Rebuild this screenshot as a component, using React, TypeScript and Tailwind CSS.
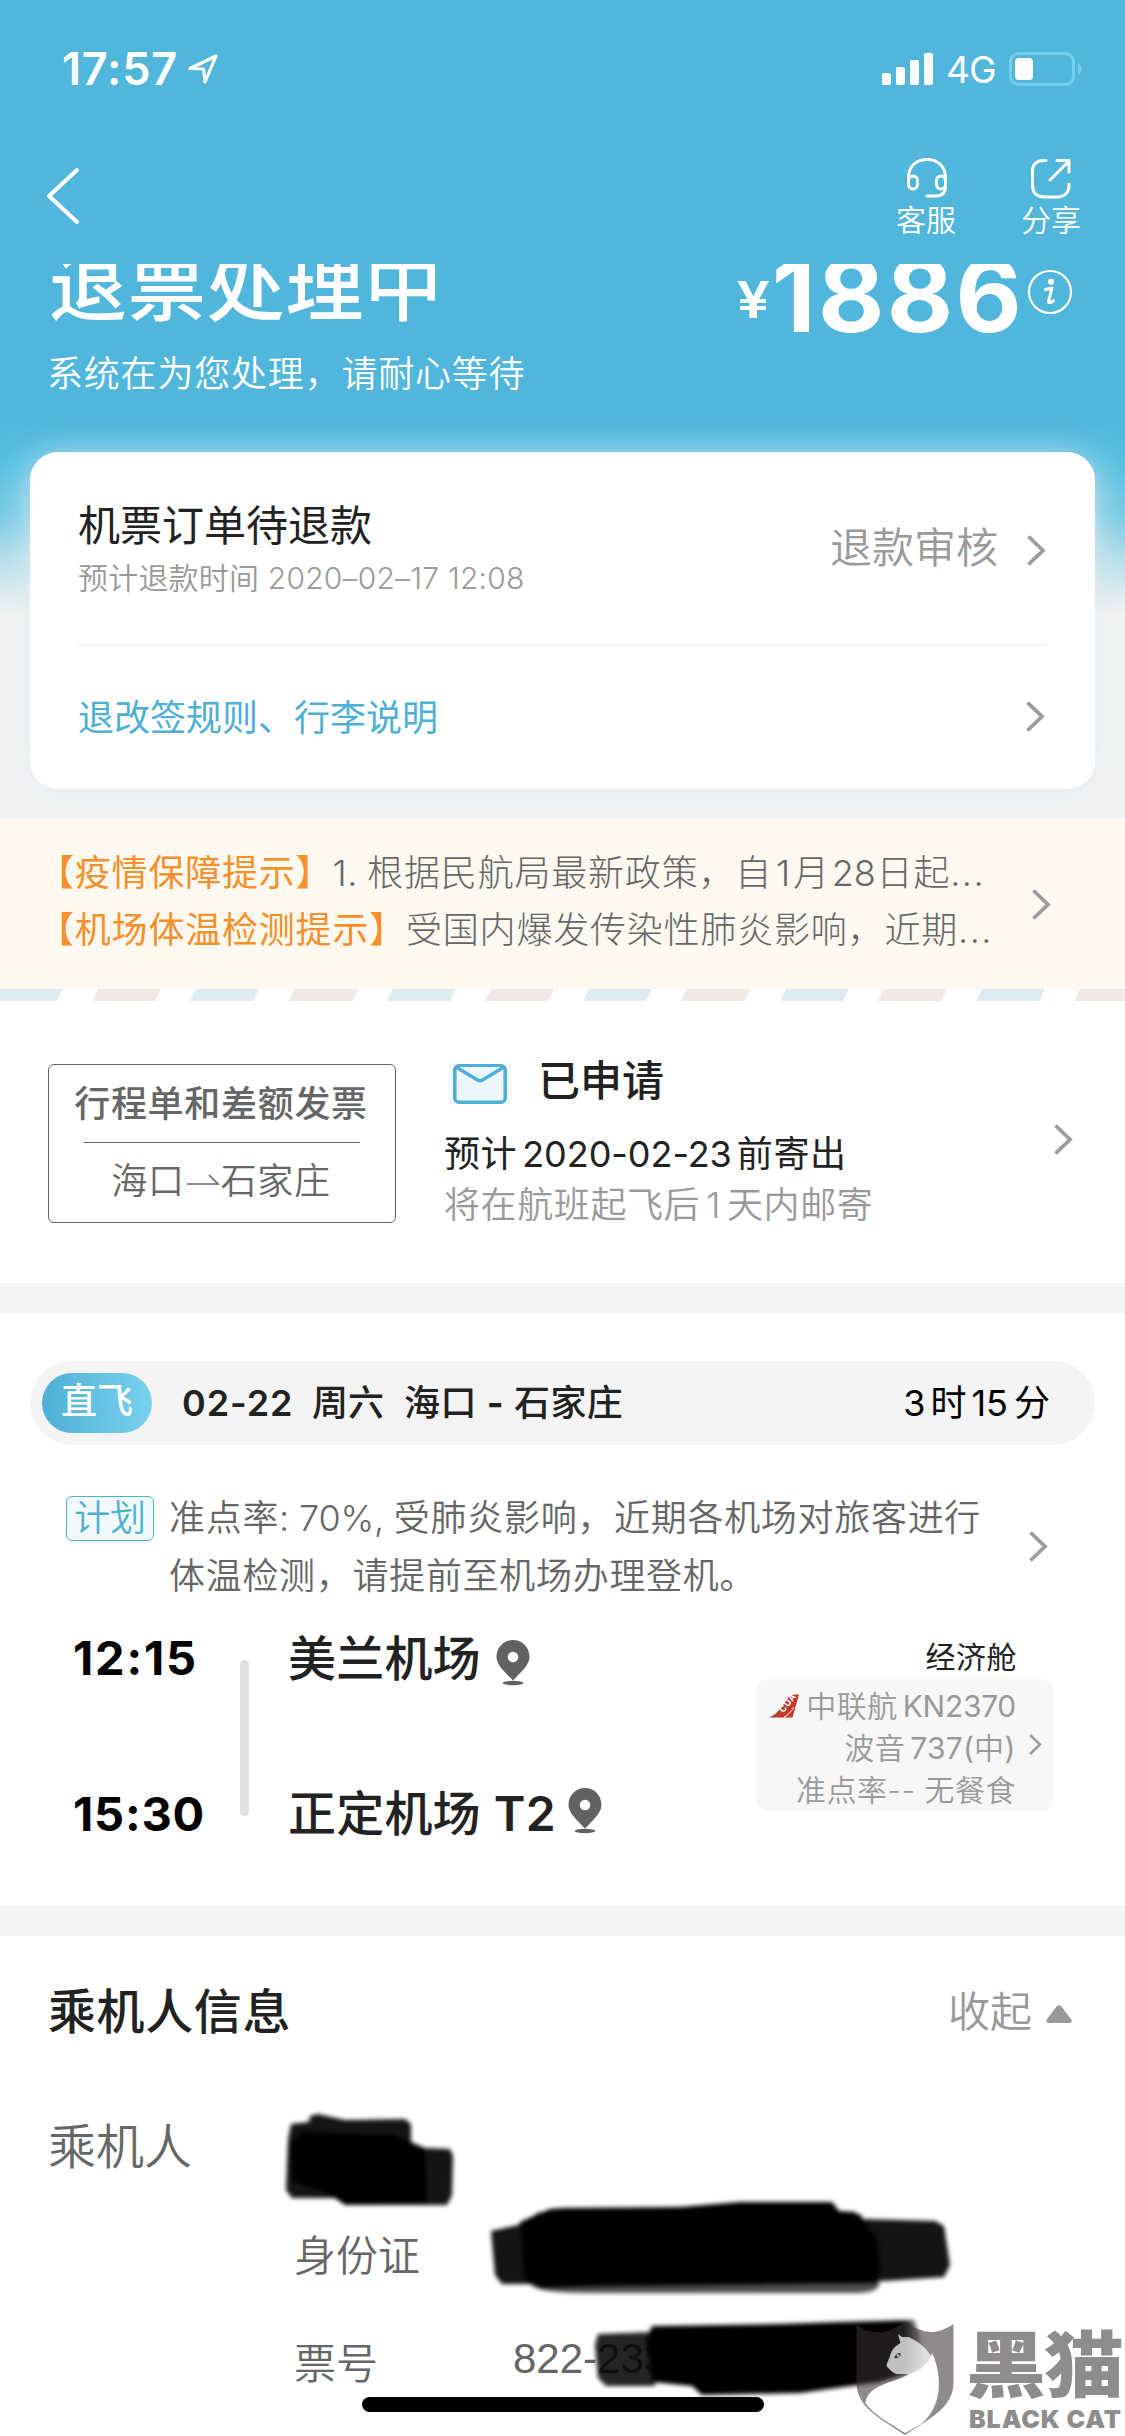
import React from 'react'

const Chevron = ({ className = 'w-[19px] h-[31px]' }: { className?: string }) => (
  <svg viewBox="0 0 19 31" className={className} fill="none" stroke="#9c9c9c" strokeWidth="3.8">
    <path d="M1.500 1.500 L16 15.500 L1.500 29.500" />
  </svg>
)

const Pin = () => (
  <svg viewBox="0 0 34 46" className="w-[34px] h-[46px]">
    <path d="M17 0 C7.500 0 0.500 7.500 0.500 17 C0.500 25 9 32 17 40.500 C25 32 33.500 25 33.500 17 C33.500 7.500 26.500 0 17 0 Z" fill="#626262" />
    <circle cx="17" cy="17" r="5.300" fill="#fff" />
    <ellipse cx="17" cy="43" rx="10.500" ry="2.200" fill="#626262" />
  </svg>
)

const StatusBar = () => (
  <div className="flex items-center h-[138px] pl-[62px] pr-[43px] text-white">
    <span className="text-[45px] leading-[50px] font-semibold tracking-[0.8px]">17:57</span>
    <svg viewBox="0 0 30 30" className="w-[30px] h-[30px] ml-[10px]" fill="none" stroke="#fff" strokeWidth="3.2" strokeLinejoin="round">
      <path d="M28 2 L2 14.500 L15.500 15 L17 28 Z" />
    </svg>
    <div className="flex items-end gap-[5px] ml-auto">
      <i className="w-[9px] h-[12px] rounded-[2px] bg-white" />
      <i className="w-[9px] h-[18px] rounded-[2px] bg-white" />
      <i className="w-[9px] h-[25px] rounded-[2px] bg-white" />
      <i className="w-[9px] h-[32px] rounded-[2px] bg-white" />
    </div>
    <span className="ml-[13px] w-[50px] text-[37px] leading-[42px] tracking-[-1px] mt-[2px]">4G</span>
    <svg viewBox="0 0 74 34" className="w-[74px] h-[34px] ml-[13px] -mr-px">
      <rect x="1.500" y="1.500" width="63" height="31" rx="8" fill="none" stroke="#76cdea" strokeWidth="3" />
      <rect x="6" y="6" width="18" height="22" rx="4" fill="#fff" />
      <path d="M69 11 C74 13 74 21 69 23 Z" fill="#76cdea" />
    </svg>
  </div>
)

const NavBar = () => (
  <div className="flex items-start h-[126px] pl-[46px] pr-[44px] text-white">
    <svg viewBox="0 0 34 58" className="w-[34px] h-[58px] mt-[29px]" fill="none" stroke="#fff" strokeWidth="4" strokeLinecap="round" strokeLinejoin="round">
      <path d="M31 3 L3 29 L31 55" />
    </svg>
    <div className="ml-auto flex flex-col items-center w-[60px] mt-[19px]">
      <svg viewBox="0 0 42 42" className="w-[42px] h-[42px] ml-[2px]" fill="none" stroke="#fff" strokeWidth="3" strokeLinecap="round">
        <path d="M2.500 27 V21 C2.500 9 10.500 2.500 21 2.500 C31.500 2.500 39.500 9 39.500 21 V29 C39.500 36 35.500 39 30 39 H21" />
        <rect x="2.500" y="19" width="9" height="13" rx="4.500" />
        <rect x="30.500" y="19" width="9" height="13" rx="4.500" />
      </svg>
      <span className="text-[30px] leading-[36px] font-[350] whitespace-nowrap mt-[3px]">客服</span>
    </div>
    <div className="flex flex-col items-center w-[60px] mt-[19px] ml-[65px]">
      <svg viewBox="0 0 42 42" className="w-[42px] h-[42px]" fill="none" stroke="#fff" strokeWidth="3" strokeLinecap="round" strokeLinejoin="round">
        <path d="M16 3.500 H14 C6 3.500 2.500 8 2.500 14 V28 C2.500 36 7 40 14 40 H27 C35 40 39 35 39 29 V27" />
        <path d="M27 3.500 H39 V15 M38.500 4.500 L20 23" />
      </svg>
      <span className="text-[30px] leading-[36px] font-[350] whitespace-nowrap mt-[3px]">分享</span>
    </div>
  </div>
)

const Hero = () => (
  <div className="h-[188px] overflow-hidden pl-[47px] pr-[50px] text-white">
    <div className="flex items-start justify-between -mt-[24px]">
      <h1 className="text-[78px] leading-[90px] font-medium tracking-[0.8px] mt-[2px] ml-[2px]">退票处理中</h1>
      <div className="flex items-start">
        <span className="text-[51px] leading-[60px] font-semibold mt-[30px] mr-[4px] scale-x-115">¥</span>
        <span className="text-[102px] leading-[110px] font-bold tracking-[2.3px]">1886</span>
        <svg viewBox="0 0 46 46" className="w-[46px] h-[46px] ml-[3px] mt-[29px] mr-[2px]">
          <circle cx="23" cy="23" r="21" fill="none" stroke="#fff" strokeWidth="2.200" />
          <circle cx="24" cy="12.800" r="3" fill="#fff" />
          <path d="M18.500 20.500 L25 19 L21.500 32.500 C21.300 34 23 34 26.500 31.800" fill="none" stroke="#fff" strokeWidth="3" strokeLinejoin="round" strokeLinecap="round" />
        </svg>
      </div>
    </div>
    <p className="text-[36px] leading-[44px] font-[350] tracking-[0.8px] mt-[2px]">系统在为您处理，请耐心等待</p>
  </div>
)

const RefundCard = () => (
  <div className="mx-[30px] h-[337px] rounded-[28px] bg-white px-[48px] shadow-[0_6px_36px_rgba(228,235,239,0.9)]">
    <div className="flex items-center h-[193px] border-b border-[#ebebeb]">
      <div className="flex flex-col mt-[2px]">
        <h2 className="text-[42px] leading-[54px] text-[#222]">机票订单待退款</h2>
        <p className="text-[30px] leading-[44px] font-[350] text-[#999] tracking-[0.2px] mt-[3px]">预计退款时间 2020–02–17 12:08</p>
      </div>
      <span className="ml-auto text-[42px] leading-[50px] font-[350] text-[#999]">退款审核</span>
      <span className="ml-[29px] mr-px mt-[5px]"><Chevron /></span>
    </div>
    <div className="flex items-center h-[144px]">
      <span className="text-[36px] leading-[44px] text-[#4eb0d6] mt-[2px]">退改签规则、行李说明</span>
      <span className="ml-auto mr-[2px] -mt-[2px]"><Chevron /></span>
    </div>
  </div>
)

const Notice = () => (
  <div className="flex items-center h-[170px] bg-[#fdf8f0] pl-[38px] pr-[74px] text-[36px] leading-[57px] tracking-[0.8px] text-[#666]">
    <div className="font-light whitespace-nowrap -mt-[5px]">
      <p>
        <span className="font-normal text-[#f7902a]">【疫情保障提示】</span>1.&nbsp;<span className="-ml-[2px]">根据民航局最新政策，自</span>
        <span className="ml-[4px] mr-[2px]">1</span>月<span className="ml-[2px] mr-px tracking-[-0.200px]">28</span>日起<span className="tracking-[1.500px]">...</span>
      </p>
      <p><span className="font-normal text-[#f7902a]">【机场体温检测提示】</span>受国内爆发传染性肺炎影响，近期<span className="tracking-[1.500px]">...</span></p>
    </div>
    <span className="ml-auto"><Chevron /></span>
  </div>
)

const Stripes = () => (
  <div className="flex gap-[35.200px] h-[12px] overflow-hidden bg-white">
    {Array.from({ length: 12 }, (_, i) => (
      <i
        key={i}
        className={`h-[12px] w-[63px] shrink-0 -skew-x-[26deg] first:-ml-[3px] ${i % 2 ? 'bg-[#f1e7e5]' : 'bg-[#deecf1]'}`}
      />
    ))}
  </div>
)

const Invoice = () => (
  <div className="flex h-[282px] bg-white pl-[48px] pr-[52px] pt-[63px]">
    <div className="w-[348px] h-[159px] rounded-[6px] border border-[#666] flex flex-col items-center text-[36px] leading-[44px] tracking-[0.7px] text-[#666]">
      <span className="font-medium mt-[17px] -ml-[2px] whitespace-nowrap">行程单和差额发票</span>
      <i className="w-[276px] h-px bg-[#666] mt-[16px]" />
      <span className="flex mt-[16px] -ml-[2px] font-[350]">
        海口
        <svg viewBox="0 0 36 44" className="w-[36px] h-[44px]" fill="none" stroke="#666" strokeWidth="1.600">
          <path d="M2 25 H33 L24 16" />
        </svg>
        石家庄
      </span>
    </div>
    <div className="ml-[48px] text-[36px] tracking-[0.6px]">
      <div className="flex items-center ml-[9px] h-[40px]">
        <svg viewBox="0 0 54 40" className="w-[54px] h-[40px]" fill="#eef7fc" stroke="#4eb0d6" strokeWidth="3.600" strokeLinejoin="round">
          <rect x="1.800" y="1.800" width="50.400" height="36.400" rx="4" />
          <path d="M3 3 L24.500 16 Q27 17.500 29.500 16 L51 3" />
        </svg>
        <span className="ml-[31px] -mt-[6px] text-[42px] leading-[50px] font-medium text-[#222] tracking-[0]">已申请</span>
      </div>
      <p className="mt-[28px] leading-[44px] text-[#222] whitespace-nowrap">
        预计<span className="mx-[5px] tracking-[-0.050px]">2020-02-23</span>前寄出
      </p>
      <p className="mt-[7px] leading-[44px] font-[350] text-[#999] whitespace-nowrap">将在航班起飞后<span className="mx-[6px]">1</span>天内邮寄</p>
    </div>
    <span className="ml-auto mt-[60px]"><Chevron /></span>
  </div>
)

const Flight = () => (
  <div className="h-[593px] bg-white pt-[48px]">
    <div className="flex items-center h-[84px] mx-[30px] pl-[12px] pr-[45px] rounded-full bg-[#f4f4f4] text-[36px] leading-[44px] font-semibold text-[#222]">
      <span className="w-[110px] h-[60px] rounded-full bg-linear-to-r from-[#4eb0d6] to-[#79d2ec] text-white font-medium text-center leading-[56px]">直飞</span>
      <span className="ml-[30px] w-[130px] tracking-[0.900px]">02-22</span>
      <span className="w-[92px] font-medium">周六</span>
      <span className="font-medium tracking-[0.400px]">海口 <b className="font-bold">-</b> 石家庄</span>
      <span className="ml-auto font-normal text-black">3<span className="mx-[5px]">时</span>15<span className="ml-[6px]">分</span></span>
    </div>
    <div className="flex items-start mt-[43px] pl-[66px] pr-[77px]">
      <span className="w-[88px] h-[45px] mt-[8px] rounded-[6px] border border-[#4eb0d6] bg-[#f2f9fc] text-[36px] leading-[43px] font-[350] text-center text-[#4eb0d6]">计划</span>
      <p className="ml-[15px] mt-px text-[36px] leading-[58px] tracking-[0.7px] font-[350] text-[#666] whitespace-nowrap">
        准点率<span className="tracking-[-0.200px]">: 70%, </span>受肺炎影响，近期各机场对旅客进行<br />体温检测，请提前至机场办理登机。
      </p>
      <span className="ml-auto mt-[43px]"><Chevron /></span>
    </div>
    <div className="flex pl-[73px] mt-[28px]">
      <div className="flex flex-col justify-between w-[167px] h-[206px] text-[47px] leading-[50px] font-bold text-black">
        <span className="tracking-[1.800px]">12:15</span>
        <span className="tracking-[0.800px]">15:30</span>
      </div>
      <i className="w-[9px] h-[156px] mt-[27px] rounded-full bg-[#e0e0e0]" />
      <div className="flex flex-col justify-between w-[440px] h-[206px] ml-[39px] mr-px text-[48px] leading-[50px] font-medium tracking-[0.200px] text-[#222]">
        <span className="flex items-center -mt-px">美兰机场<i className="ml-[15px] mt-[8px]"><Pin /></i></span>
        <span className="flex items-center">正定机场 <b className="ml-[13px] font-semibold">T2</b><i className="ml-[12px] -mt-[7px]"><Pin /></i></span>
      </div>
      <div className="ml-[27px] w-[297px] text-[30px] leading-[42px] tracking-[0.5px]">
        <p className="pr-[36px] text-right text-[#222] mt-[3px]">经济舱</p>
        <div className="mt-px h-[132px] rounded-[12px] bg-[#f7f7f7] pl-[13px] pr-[11px] pt-[10px] flex items-center font-[350] text-[#999]">
          <div className="flex-1 flex flex-col items-end h-[130px]">
            <p className="flex items-center self-stretch">
              <svg viewBox="0 0 30 24" className="w-[30px] h-[24px]">
                <path d="M0 23.500 C9 20 14 11 19 4 C21 1 23 0.500 30 0.500 L23.500 23.500 Z" fill="#c23a2b" />
                <text x="11" y="18" fontSize="9" fontWeight="700" fill="#fff" transform="rotate(-52 14 15)">CUA</text>
                <path d="M15 23 C18 22 22 18 25 13" stroke="#fff" strokeWidth="1" fill="none" />
              </svg>
              <span className="ml-auto whitespace-nowrap">中联航<span className="ml-[5px] font-normal tracking-[-0.300px]">KN2370</span></span>
            </p>
            <p>波音<span className="ml-[5px] font-normal tracking-[0.200px]">737(</span>中<span className="font-normal">)</span></p>
            <p className="whitespace-nowrap">准点率-- 无餐食</p>
          </div>
          <span className="ml-[13px] -mt-[12px]"><Chevron className="w-[13px] h-[21px]" /></span>
        </div>
      </div>
    </div>
  </div>
)

const Passenger = () => (
  <div className="flex-1 bg-white pl-[48px] pr-[50px] pt-[46px] text-[#666]">
    <div className="flex items-center h-[60px] pr-[3px]">
      <h2 className="text-[48px] leading-[60px] font-medium tracking-[0.600px] text-[#222]">乘机人信息</h2>
      <span className="ml-auto text-[42px] leading-[50px] font-[350] text-[#999]">收起</span>
      <svg viewBox="0 0 26 18" className="w-[26px] h-[18px] ml-[14px] mt-[4px]" fill="#999">
        <path d="M10.800 1.200 Q13 -0.800 15.200 1.200 L25.300 14.500 Q26.500 18 23.500 18 H2.500 Q-0.500 18 0.700 14.500 Z" />
      </svg>
    </div>
    <p className="mt-[75px] text-[48px] leading-[60px] font-[350]">乘机人</p>
    <div className="ml-[246px] mt-[54px] text-[42px] leading-[50px] font-[350]">
      <p>身份证</p>
      <p className="flex mt-[58px]">
        <span className="w-[219px]">票号</span>
        <span className="font-['Liberation_Sans'] font-normal -mt-[5px]">822-233</span>
      </p>
    </div>
  </div>
)

// strokes painted over the private fields
const Redactions = () => (
  <svg viewBox="270 2090 700 320" className="absolute left-[270px] top-[2090px] w-[700px] h-[320px]">
    <defs>
      <filter id="soft" x="-5%" y="-10%" width="110%" height="120%"><feGaussianBlur stdDeviation="2" /></filter>
      <linearGradient id="fade" x1="0" x2="1" y1="0" y2="0">
        <stop offset="0.930" stopColor="#000" />
        <stop offset="1" stopColor="#000" stopOpacity="0.200" />
      </linearGradient>
    </defs>
    <g filter="url(#soft)">
      <path fillOpacity="0.920" d="M291 2124 L309 2122 L310 2116 L318 2114 L345 2120 L405 2119 L411 2124 L411 2142 L425 2148 L450 2149 L453 2156 L452 2195 L447 2205 L345 2205 L335 2198 L292 2198 L286 2190 L288 2140 Z" />
      <path d="M291 2145 L300 2132 L395 2135 L425 2150 L427 2203 L345 2204 L325 2192 L292 2182 Z" />
      <path fillOpacity="0.920" d="M491 2231 L518 2225 L540 2212 L860 2214 L863 2219 L935 2221 L944 2226 L950 2265 L944 2277 L885 2281 L520 2284 L502 2284 L495 2275 Z" />
      <path d="M520 2222 L550 2209 L562 2208 L680 2207 L740 2202 L832 2202 L839 2211 L855 2212 L864 2222 L878 2240 L880 2270 L877 2283 L600 2286 L540 2288 L525 2280 Z" />
      <path fillOpacity="0.700" d="M528 2282 H880 C878 2292 868 2293 850 2293 H600 C560 2293 535 2292 528 2282 Z" />
      <path fillOpacity="0.860" d="M598 2334 L655 2332 L655 2386 L606 2386 L598 2378 L595 2345 Z" />
      <path fill="url(#fade)" d="M652 2326 L780 2324 L840 2322 L914 2320 L920 2335 L923 2368 L880 2382 L800 2393 L702 2395 L692 2386 L652 2382 L646 2340 Z" />
    </g>
  </svg>
)

const Watermark = () => (
  <div className="absolute left-[856px] top-[2320px] flex">
    <svg viewBox="856 2320 98 116" className="w-[98px] h-[116px]">
      <path
        fill="rgb(57,50,54)"
        fillOpacity="0.565"
        d="M856.500 2325 Q880 2341 905 2321.500 Q930 2341 953.500 2324 V2383 C953 2408 930 2418 905 2435 C880 2418 857 2408 856.500 2383 Z"
      />
      <path
        fill="#fff"
        fillOpacity="0.720"
        d="M898 2334 L902 2337 L908.500 2337 C930 2347 939 2364 939 2385 C939 2403 931 2416 921 2424 L905 2433 C888 2422 874 2415 865.500 2403 C868 2384 895 2383 908.500 2374 H896 C892 2372 890 2370 886.500 2366 C887 2362 888.500 2361 890 2356 C892 2348 896 2346 900.500 2343 Z"
      />
      <path fill="#fff" d="M908.500 2375 C922 2370 930 2362 932 2353 C943 2375 941 2408 921 2424 L905 2433 C888 2422 874 2415 865.500 2403 C868 2384 895 2383 908.500 2375 Z" />
      <path d="M894 2358 Q898 2351 901 2354 Q899 2359 894 2358 Z" fill="#333" />
      <circle cx="898" cy="2355.500" r="1.200" fill="#ccc" />
    </svg>
    <div className="ml-[12px] text-[#8f8c8d]">
      <p className="text-[80px] leading-[80px] mt-[5px] font-black whitespace-nowrap tracking-[-2px] scale-y-90">黑猫</p>
      <p className="text-[25px] leading-[26px] mt-px ml-[3px] font-black tracking-[0.900px] whitespace-nowrap">BLACK CAT</p>
    </div>
  </div>
)

export default function App() {
  return (
    <div className="relative flex flex-col w-[1125px] h-[2436px] overflow-hidden bg-[#f4f4f4] font-['Inter','Noto_Sans_CJK_SC',sans-serif]">
      <div className="h-[819px] bg-[linear-gradient(180deg,#50b6dc_0px,#50b6dc_420px,#57c0e2_465px,#75cae5_515px,#b5deeb_560px,#dcebf1_595px,#f3f3f3_614px)]">
        <StatusBar />
        <NavBar />
        <Hero />
        <RefundCard />
      </div>
      <Notice />
      <Stripes />
      <Invoice />
      <i className="h-[30px] shrink-0" />
      <Flight />
      <i className="h-[30px] shrink-0" />
      <Passenger />
      <Redactions />
      <i className="absolute left-[362px] top-[2397px] w-[402px] h-[15px] rounded-full bg-black" />
      <Watermark />
    </div>
  )
}
